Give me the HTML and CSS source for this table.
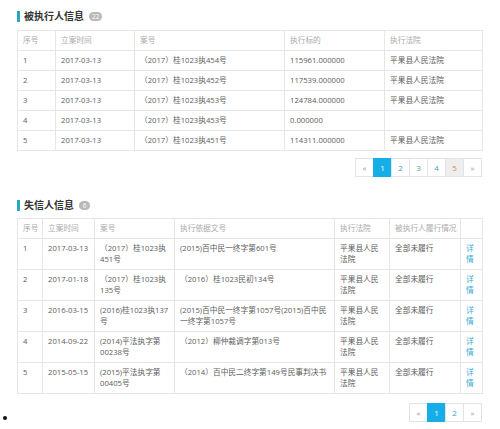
FILE: index.html
```html
<!DOCTYPE html>
<html lang="zh">
<head>
<meta charset="utf-8">
<link rel="stylesheet" href="styles.css">
</head>
<body>
<div class="page">
  <section class="section">
    <h2 class="title"><span class="bar"></span>被执行人信息<span class="badge">22</span></h2>
    <table class="grid">
      <colgroup><col style="width:38px"><col style="width:79px"><col style="width:150px"><col style="width:100px"><col style="width:98px"></colgroup>
      <thead><tr><th>序号</th><th>立案时间</th><th>案号</th><th>执行标的</th><th>执行法院</th></tr></thead>
      <tbody>
        <tr><td>1</td><td>2017-03-13</td><td>（2017）桂1023执454号</td><td>115961.000000</td><td>平果县人民法院</td></tr>
        <tr><td>2</td><td>2017-03-13</td><td>（2017）桂1023执452号</td><td>117539.000000</td><td>平果县人民法院</td></tr>
        <tr><td>3</td><td>2017-03-13</td><td>（2017）桂1023执453号</td><td>124784.000000</td><td>平果县人民法院</td></tr>
        <tr><td>4</td><td>2017-03-13</td><td>（2017）桂1023执453号</td><td>0.000000</td><td></td></tr>
        <tr><td>5</td><td>2017-03-13</td><td>（2017）桂1023执451号</td><td>114311.000000</td><td>平果县人民法院</td></tr>
      </tbody>
    </table>
    <div class="pager-row">
      <ul class="pager">
        <li class="arrow">«</li><li class="active">1</li><li>2</li><li>3</li><li>4</li><li class="hover">5</li><li class="arrow">»</li>
      </ul>
    </div>
  </section>

  <section class="section second">
    <h2 class="title"><span class="bar"></span>失信人信息<span class="badge">6</span></h2>
    <table class="grid tall">
      <colgroup><col style="width:25px"><col style="width:52px"><col style="width:80px"><col style="width:160px"><col style="width:55px"><col style="width:71px"><col style="width:22px"></colgroup>
      <thead><tr><th>序号</th><th>立案时间</th><th>案号</th><th>执行依据文号</th><th>执行法院</th><th>被执行人履行情况</th><th></th></tr></thead>
      <tbody>
        <tr><td>1</td><td>2017-03-13</td><td>（2017）桂1023执451号</td><td>(2015)百中民一终字第601号</td><td>平果县人民法院</td><td>全部未履行</td><td><a class="link">详情</a></td></tr>
        <tr><td>2</td><td>2017-01-18</td><td>（2017）桂1023执135号</td><td>（2016）桂1023民初134号</td><td>平果县人民法院</td><td>全部未履行</td><td><a class="link">详情</a></td></tr>
        <tr><td>3</td><td>2016-03-15</td><td>(2016)桂1023执137号</td><td>(2015)百中民一终字第1057号(2015)百中民一终字第1057号</td><td>平果县人民法院</td><td>全部未履行</td><td><a class="link">详情</a></td></tr>
        <tr><td>4</td><td>2014-09-22</td><td>(2014)平法执字第00238号</td><td>（2012）柳仲裁调字第013号</td><td>平果县人民法院</td><td>全部未履行</td><td><a class="link">详情</a></td></tr>
        <tr><td>5</td><td>2015-05-15</td><td>(2015)平法执字第00405号</td><td>（2014）百中民二终字第149号民事判决书</td><td>平果县人民法院</td><td>全部未履行</td><td><a class="link">详情</a></td></tr>
      </tbody>
    </table>
  </section>
  <div class="last-row">
    <span class="dot"></span>
    <ul class="pager">
      <li class="arrow">«</li><li class="active">1</li><li>2</li><li class="arrow">»</li>
    </ul>
  </div>
</div>
</body>
</html>
```
FILE: styles.css
```css
html, body {
  margin: 0;
  padding: 0;
  background: #fff;
}
body {
  font-family: "Open Sans", "Noto Sans CJK SC", sans-serif;
  color: #666;
  font-size: 7.7px;
}
.page {
  width: 500px;
  padding-top: 10px;
}
.section {
  padding: 0 18px 0 17px;
}
.section.second {
  margin-top: 22px;
}
.title {
  display: flex;
  align-items: center;
  margin: 0 0 8px 0;
  height: 12px;
  font-family: "Noto Sans CJK SC", sans-serif;
  font-size: 10px;
  font-weight: bold;
  color: #333;
  line-height: 12px;
}
.second .title {
  margin-bottom: 7px;
}
.bar {
  display: inline-block;
  width: 3px;
  height: 11px;
  background: #2ba7c4;
  margin-right: 4px;
}
.badge {
  display: inline-block;
  margin-left: 5px;
  min-width: 5px;
  height: 9px;
  padding: 0 3px;
  border-radius: 5px;
  background: #b9b9b9;
  color: #fff;
  font-family: "Open Sans", sans-serif;
  font-size: 6.5px;
  line-height: 9px;
  font-weight: normal;
  text-align: center;
}
.grid {
  width: 465px;
  border-collapse: collapse;
  table-layout: fixed;
}
.grid th, .grid td {
  border: 1px solid #e6e6e6;
  padding: 4px 5px;
  line-height: 11px;
  text-align: left;
  vertical-align: top;
  font-weight: normal;
}
.grid th {
  color: #aaa;
  white-space: nowrap;
}
.grid td {
  color: #5c5c5c;
}
.link {
  color: #3aa9d6;
}
.pager-row {
  display: flex;
  justify-content: flex-end;
  margin-top: 7px;
}
.pager {
  display: flex;
  list-style: none;
  margin: 0;
  padding: 0;
}
.pager li {
  width: 17px;
  height: 17px;
  border: 1px solid #e3e3e3;
  margin-left: -1px;
  display: flex;
  align-items: center;
  justify-content: center;
  color: #3a9fba;
  font-size: 8px;
}
.pager li:first-child {
  margin-left: 0;
}
.pager li.arrow {
  color: #999;
}
.pager li.active {
  background: #16aee6;
  border-color: #16aee6;
  color: #fff;
}
.pager li.hover {
  background: #eeeeee;
  color: #e08a5a;
}
.last-row {
  display: flex;
  justify-content: space-between;
  align-items: flex-end;
  margin-top: 9px;
  padding: 0 18px 0 3px;
}
.dot {
  width: 4px;
  height: 4px;
  border-radius: 50%;
  background: #111;
  margin-bottom: 2px;
}
```
